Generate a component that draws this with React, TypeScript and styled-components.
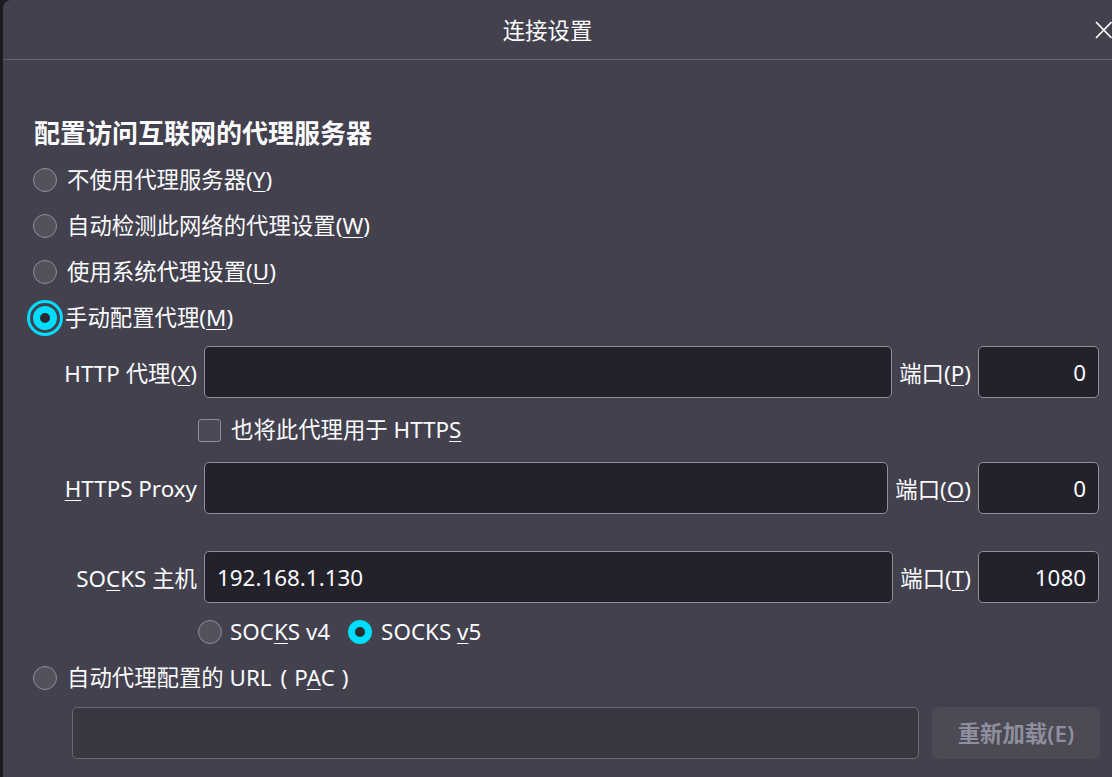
import styled, { createGlobalStyle } from "styled-components";

const GlobalStyle = createGlobalStyle`
  html, body {
    margin: 0;
    padding: 0;
    height: 100%;
    overflow: hidden;
    background: #1c1b22;
  }
  #root {
    height: 100%;
  }
`;

// 전체 페이지
const Page = styled.div`
  display: flex;
  height: 100vh;
  padding-left: 3px;
  box-sizing: border-box;
  font-family: "Noto Sans", "Noto Sans CJK SC", sans-serif;
  color: #fbfbfe;
`;

// 대화 상자
const Dialog = styled.div`
  flex: 1;
  display: flex;
  flex-direction: column;
  background: #42414d;
  border-top-left-radius: 8px;
  overflow: hidden;
`;

const Header = styled.header`
  flex-shrink: 0;
  height: 59px;
  display: flex;
  align-items: center;
  border-bottom: 1px solid #64636d;
`;

const Title = styled.h1`
  flex: 1;
  margin: 0;
  text-align: center;
  font-size: 22.4px;
  font-weight: 400;
`;

const CloseButton = styled.button`
  width: 20px;
  height: 59px;
  padding: 0 0 0 3px;
  border: 0;
  background: none;
  color: #fbfbfe;
  display: flex;
  align-items: center;
  justify-content: flex-start;
  margin-top: 1px;
`;

const Content = styled.div`
  display: flex;
  flex-direction: column;
  padding: 0 13px 0 30px;
  font-size: 22.4px;
`;

const Heading = styled.h2`
  margin: 53px 0 4px;
  padding-left: 1px;
  font-size: 26px;
  line-height: 40px;
  font-weight: 700;
`;

const Key = styled.span`
  text-decoration: underline;
  text-underline-offset: 3px;
  text-decoration-thickness: 1px;
`;

// 전각 괄호처럼 양쪽 여백이 있는 괄호
const WideParen = styled.span<{ $before: number; $after: number }>`
  margin-left: ${(p) => p.$before}px;
  margin-right: ${(p) => p.$after}px;
`;

const OptionRow = styled.div<{ $height?: number; $top?: number; $indent?: number }>`
  display: flex;
  align-items: center;
  height: ${(p) => p.$height ?? 46}px;
  margin-top: ${(p) => p.$top ?? 0}px;
  padding-left: ${(p) => p.$indent ?? 0}px;
  white-space: nowrap;
`;

const Radio = styled.span<{ $checked?: boolean; $focused?: boolean; $gap?: number }>`
  flex-shrink: 0;
  width: 24px;
  height: 24px;
  box-sizing: border-box;
  border-radius: 50%;
  margin-right: ${(p) => p.$gap ?? (p.$focused ? 8 : 10)}px;
  border: ${(p) => (p.$checked ? "7px solid #00ddff" : "1px solid #8f8f9d")};
  background: ${(p) => (p.$checked ? "#2b2a33" : "#52515c")};
  box-shadow: ${(p) =>
    p.$focused ? "0 0 0 3px #42414d, 0 0 0 6px #00ddff" : "none"};
`;

const OptionText = styled.span`
  line-height: 30px;
`;

const Spacer = styled.span<{ $w: number }>`
  display: inline-block;
  width: ${(p) => p.$w}px;
`;

const Checkbox = styled.span`
  flex-shrink: 0;
  width: 23px;
  height: 23px;
  box-sizing: border-box;
  border: 1px solid #8f8f9d;
  border-radius: 3px;
  background: #4a4955;
  margin-right: 10px;
`;

// 프록시 입력 행
const FieldRow = styled.div<{ $top?: number }>`
  display: flex;
  align-items: center;
  gap: 7px;
  margin-top: ${(p) => p.$top ?? 0}px;
  white-space: nowrap;
`;

const FieldLabel = styled.label`
  width: 164px;
  text-align: right;
`;

const PortLabel = styled.label``;

const TextInput = styled.input<{ $width?: number; $align?: string }>`
  ${(p) => (p.$width ? `width: ${p.$width}px; flex: none;` : "flex: 1; min-width: 0;")}
  height: 52px;
  box-sizing: border-box;
  padding: 0 12px;
  border: 1px solid #8f8f9d;
  border-radius: 5px;
  background: #23222b;
  color: #fbfbfe;
  font-family: inherit;
  font-size: 22.4px;
  text-align: ${(p) => p.$align ?? "left"};
  outline: none;

  &:disabled {
    background: #383742;
    border-color: #6a6973;
  }
`;

const PacRow = styled.div`
  display: flex;
  align-items: center;
  gap: 13px;
  height: 53px;
  margin-top: 5px;
  padding-left: 39px;
`;

const ReloadButton = styled.button`
  width: 168px;
  height: 52px;
  border: 0;
  border-radius: 5px;
  background: #4b4a55;
  color: #8f8f9d;
  font-family: inherit;
  font-size: 22.4px;
  font-weight: 600;
  margin-right: -1px;
`;

const proxies = [
  { label: "HTTP 代理", key: "X", port: "P", portValue: "0" },
];

export default function App() {
  return (
    <>
      <GlobalStyle />
      <Page>
        <Dialog>
          <Header>
            <Title>连接设置</Title>
            <CloseButton aria-label="关闭">
              <svg width="17" height="18" viewBox="0 0 17 18">
                <path d="M1 1 L16.5 17 M16.5 1 L1 17" stroke="#fbfbfe" strokeWidth="1.7" fill="none" />
              </svg>
            </CloseButton>
          </Header>
          <Content>
            <Heading>配置访问互联网的代理服务器</Heading>
            <OptionRow>
              <Radio />
              <OptionText>
                不使用代理服务器(<Key>Y</Key>)
              </OptionText>
            </OptionRow>
            <OptionRow>
              <Radio />
              <OptionText>
                自动检测此网络的代理设置(<Key>W</Key>)
              </OptionText>
            </OptionRow>
            <OptionRow>
              <Radio />
              <OptionText>
                使用系统代理设置(<Key>U</Key>)
              </OptionText>
            </OptionRow>
            <OptionRow>
              <Radio $checked $focused />
              <OptionText>
                手动配置代理(<Key>M</Key>)
              </OptionText>
            </OptionRow>

            {proxies.map((p) => (
              <FieldRow key={p.port} $top={5}>
                <FieldLabel>
                  {p.label}(<Key>{p.key}</Key>)
                </FieldLabel>
                <TextInput />
                <PortLabel>
                  端口(<Key>{p.port}</Key>)
                </PortLabel>
                <TextInput $width={121} $align="right" defaultValue={p.portValue} />
              </FieldRow>
            ))}

            <OptionRow $height={64} $indent={165}>
              <Checkbox />
              <OptionText>
                也将此代理用于 HTTP<Key>S</Key>
              </OptionText>
            </OptionRow>

            <FieldRow>
              <FieldLabel>
                <Key>H</Key>TTPS Proxy
              </FieldLabel>
              <TextInput />
              <PortLabel>
                端口(<Key>O</Key>)
              </PortLabel>
              <TextInput $width={121} $align="right" defaultValue="0" />
            </FieldRow>

            <FieldRow $top={37}>
              <FieldLabel>
                SO<Key>C</Key>KS 主机
              </FieldLabel>
              <TextInput defaultValue="192.168.1.130" />
              <PortLabel>
                端口(<Key>T</Key>)
              </PortLabel>
              <TextInput $width={121} $align="right" defaultValue="1080" />
            </FieldRow>

            <OptionRow $height={34} $top={12} $indent={165}>
              <Radio $gap={8} />
              <OptionText>
                SOC<Key>K</Key>S v4
              </OptionText>
              <Spacer $w={18} />
              <Radio $checked $gap={9} />
              <OptionText>
                SOCKS <Key>v</Key>5
              </OptionText>
            </OptionRow>

            <OptionRow $top={6}>
              <Radio />
              <OptionText>
                自动代理配置的 URL<WideParen $before={9} $after={7}>(</WideParen>P<Key>A</Key>C
                <WideParen $before={7} $after={9}>)</WideParen>
              </OptionText>
            </OptionRow>

            <PacRow>
              <TextInput disabled />
              <ReloadButton disabled>重新加载(E)</ReloadButton>
            </PacRow>
          </Content>
        </Dialog>
      </Page>
    </>
  );
}
